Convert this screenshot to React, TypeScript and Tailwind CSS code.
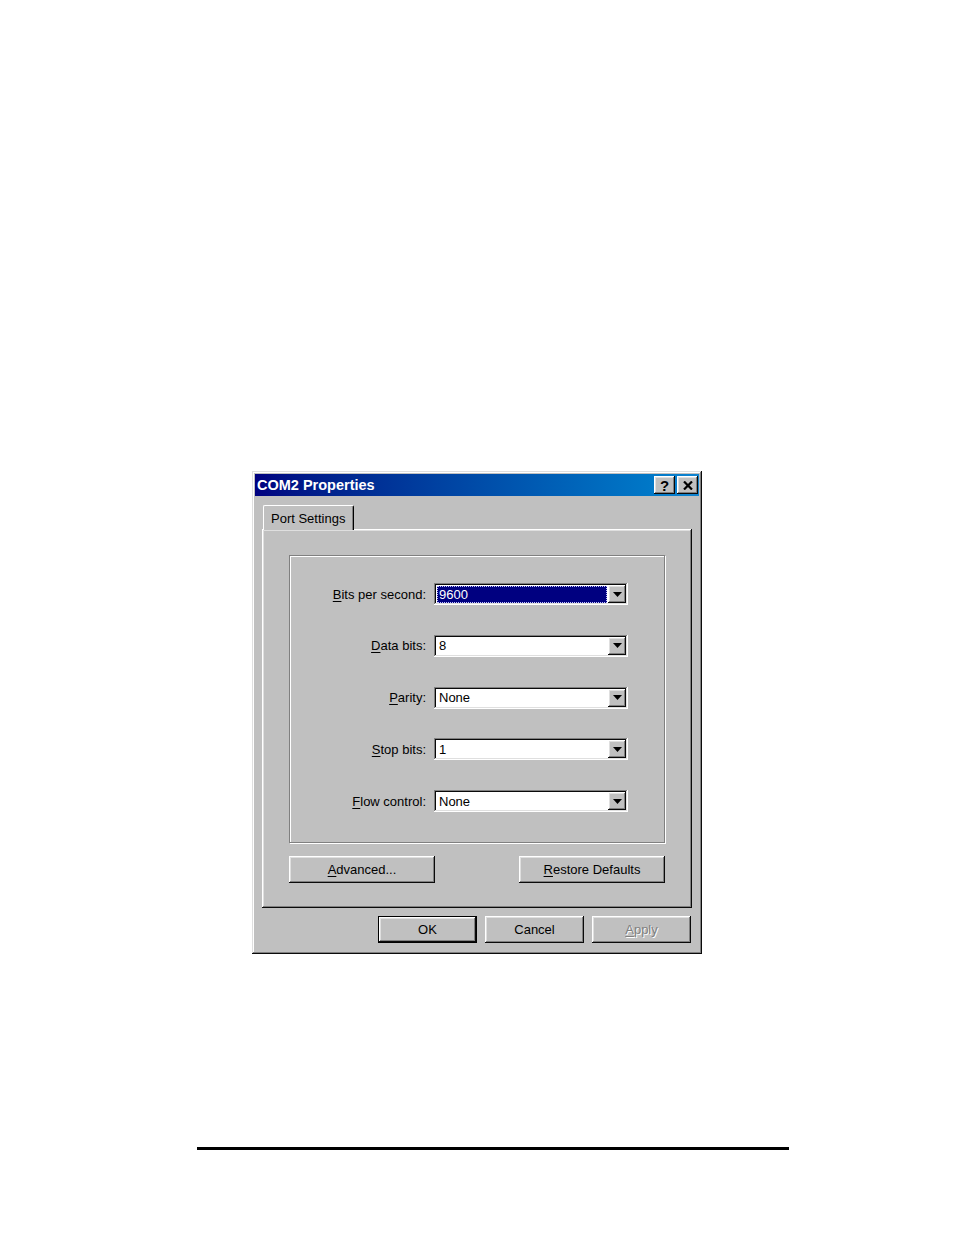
// Static recreation of a Windows 98 "COM2 Properties" dialog placed on a white page.
const FONT = "font-['Liberation_Sans',Arial,sans-serif]";

const raised =
  "shadow-[inset_-1px_-1px_#0a0a0a,inset_1px_1px_#ffffff,inset_-2px_-2px_#808080,inset_2px_2px_#dfdfdf]";
const sunken =
  "shadow-[inset_-1px_-1px_#ffffff,inset_1px_1px_#808080,inset_-2px_-2px_#dfdfdf,inset_2px_2px_#0a0a0a]";

function Key({ children }: { children: string }) {
  return <span className="underline underline-offset-[2px] decoration-1">{children}</span>;
}

function ArrowButton() {
  return (
    <div className={`w-[18px] h-[18px] bg-[#c0c0c0] ${raised} flex items-center justify-center`}>
      <svg width="9" height="5" viewBox="0 0 9 5">
        <path d="M0 0h9L4.5 5z" fill="#000" />
      </svg>
    </div>
  );
}

function Combo({ value, focused }: { value: string; focused?: boolean }) {
  return (
    <div className={`w-[194px] h-[22px] bg-white ${sunken} flex items-center p-[2px]`}>
      <div className="flex-1 h-full flex items-center pl-[1px] pr-[1px]">
        {focused ? (
          <div className="flex-1 h-[17px] bg-[#000080] border border-dotted border-[#c0c0ff] text-white flex items-center pl-[1px] leading-none">
            {value}
          </div>
        ) : (
          <span className="pl-[2px] leading-none">{value}</span>
        )}
      </div>
      <ArrowButton />
    </div>
  );
}

function Row({ label, value, focused }: { label: React.ReactNode; value: string; focused?: boolean }) {
  return (
    <div className="flex items-center justify-end gap-[8px] h-[22px]">
      <span className="leading-none">{label}</span>
      <Combo value={value} focused={focused} />
    </div>
  );
}

function Button({
  children,
  w,
  isDefault,
  disabled,
}: {
  children: React.ReactNode;
  w: string;
  isDefault?: boolean;
  disabled?: boolean;
}) {
  return (
    <div
      className={`${w} h-[27px] bg-[#c0c0c0] flex items-center justify-center ${
        isDefault ? "border border-black" : ""
      }`}
    >
      <div
        className={`w-full h-full ${raised} flex items-center justify-center ${
          disabled ? "text-[#808080] [text-shadow:1px_1px_0_#ffffff]" : "text-black"
        }`}
      >
        {children}
      </div>
    </div>
  );
}

export default function App() {
  return (
    <div className={`w-[954px] min-h-[1235px] bg-white pt-[471px] flex flex-col ${FONT} text-[13px] text-black`}>
      <div
        className={`ml-[252px] w-[450px] h-[483px] bg-[#c0c0c0] p-[3px] flex flex-col shadow-[inset_-1px_-1px_#0a0a0a,inset_1px_1px_#dfdfdf,inset_-2px_-2px_#808080,inset_2px_2px_#ffffff]`}
      >
        {/* title bar */}
        <div className="h-[22px] bg-gradient-to-r from-[#000080] to-[#1084d0] flex items-center justify-between pl-[2px] pr-[1px]">
          <span className="text-white font-bold text-[14.5px] leading-none">COM2 Properties</span>
          <div className="flex gap-[2px]">
            <div className={`w-[21px] h-[18px] bg-[#c0c0c0] ${raised} flex items-center justify-center font-bold text-[15px] leading-none`}>
              ?
            </div>
            <div className={`w-[21px] h-[18px] bg-[#c0c0c0] ${raised} flex items-center justify-center`}>
              <svg width="10" height="9" viewBox="0 0 10 9">
                <path d="M1 0.5L9 8.5M9 0.5L1 8.5" stroke="#000" strokeWidth="2.2" />
              </svg>
            </div>
          </div>
        </div>

        {/* body */}
        <div className="flex flex-col px-[7px] pt-[9px]">
          <div className="flex pl-[1px] relative z-10">
            <div className="w-[91px] h-[25px] -mb-[1px] bg-[#c0c0c0] border-t border-l border-white border-r border-r-black rounded-t-[2px] shadow-[inset_-1px_0_#808080] flex items-center pl-[7px] pt-[1px]">
              Port Settings
            </div>
          </div>
          <div className={`h-[379px] ${raised} flex flex-col px-[27px] pt-[26px]`}>
            <div className="h-[288px] border border-[#808080] shadow-[inset_1px_1px_#ffffff,1px_1px_#ffffff] flex flex-col gap-[29.75px] pt-[27px] pr-[36px]">
              <Row label={<><Key>B</Key>its per second:</>} value="9600" focused />
              <Row label={<><Key>D</Key>ata bits:</>} value="8" />
              <Row label={<><Key>P</Key>arity:</>} value="None" />
              <Row label={<><Key>S</Key>top bits:</>} value="1" />
              <Row label={<><Key>F</Key>low control:</>} value="None" />
            </div>
            <div className="flex justify-between mt-[13px]">
              <Button w="w-[146px]">
                <span>
                  <Key>A</Key>dvanced...
                </span>
              </Button>
              <Button w="w-[146px]">
                <span>
                  <Key>R</Key>estore Defaults
                </span>
              </Button>
            </div>
          </div>
          <div className="flex justify-end gap-[8px] mt-[8px] pr-[1px]">
            <Button w="w-[99px]" isDefault>
              OK
            </Button>
            <Button w="w-[99px]">Cancel</Button>
            <Button w="w-[99px]" disabled>
              <span>
                <Key>A</Key>pply
              </span>
            </Button>
          </div>
        </div>
      </div>

      <div className="ml-[197px] mt-[193px] w-[592px] h-[3px] bg-black" />
    </div>
  );
}
